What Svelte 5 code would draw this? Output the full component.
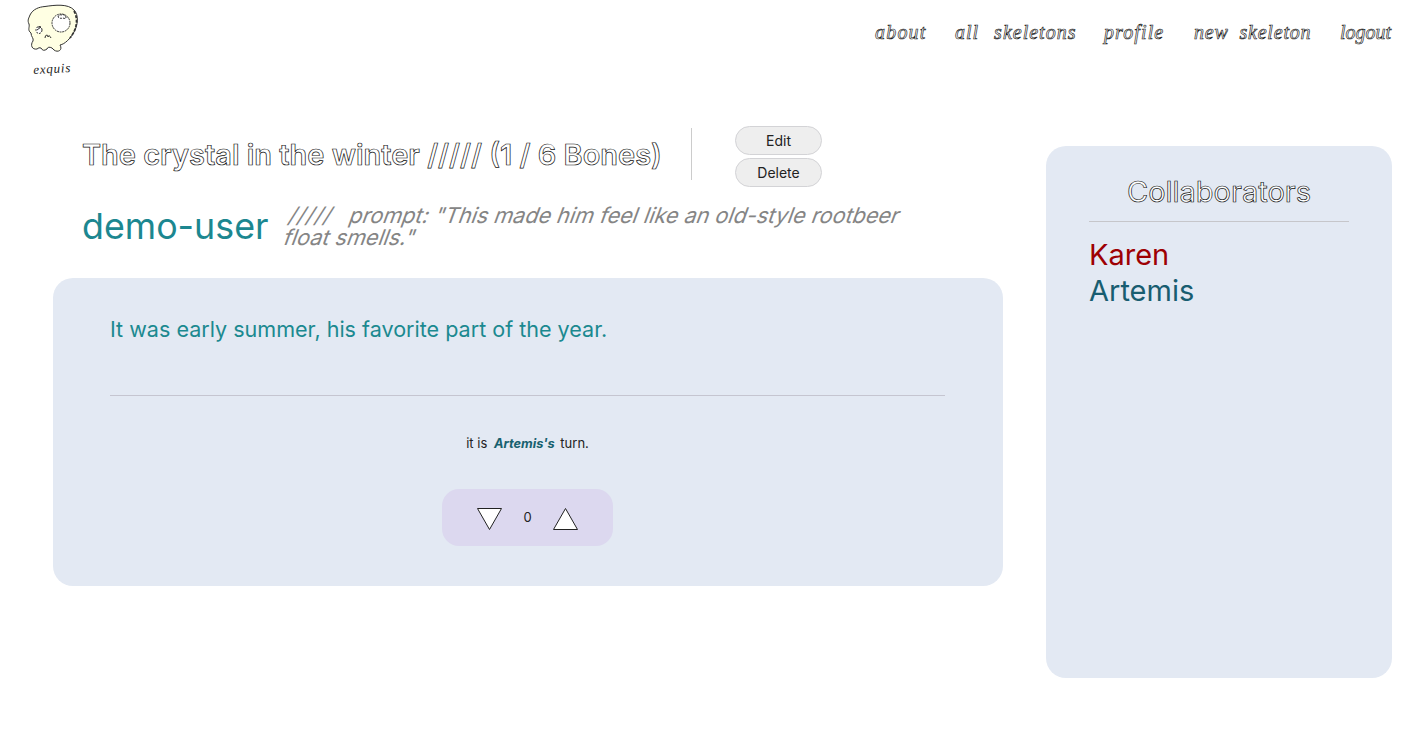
<script>
  const links = [
    { label: 'about', width: 52 },
    { label: 'all skeletons', width: 121 },
    { label: 'profile', width: 62 },
    { label: 'new skeleton', width: 118 },
    { label: 'logout', width: 51 }
  ];
  const people = [
    { name: 'Karen', tone: 'red' },
    { name: 'Artemis', tone: 'teal' }
  ];
</script>

<div class="page">
  <header>
    <div class="brand">
      <svg class="skull" viewBox="0 0 52 50" width="52" height="50" fill="none" stroke="#333" stroke-width="1">
        <path fill="#ffffe3" d="M3 11C6 5 12 3 18 2.500C28 1 41-.5 47 6C52 11 51 21 47 28C43 35 38 40 33 41C36 46 31 49 27 46L25 44Q21 42 20 45Q16 48 14 44Q12 43 10 45C5 46 3 41 6 37C7 34 4 33 4 29C0 26 3 23 2 20C0 16 2 14 3 11Z" />
        <path d="M47 7C52 16 49 27 43 34" stroke-width="1.7" stroke-dasharray="3 1.500" />
        <circle cx="34" cy="19" r="9" fill="#fff" stroke-dasharray="2 .7" />
        <path d="M31 13q1-3 4-2q4-1 4 3q-1 1-3 0q-3 1-5-1" stroke-dasharray="2 1" />
        <ellipse cx="12" cy="26" rx="3" ry="3.500" fill="#fff" stroke-dasharray="2 1" />
        <path d="m10 26 4-3M11 23h3M18 34q0-3 2-3q1 0 1 2q1-3 3 1" />
      </svg>
      <span class="wordmark">exquis</span>
    </div>
    <nav>
      {#each links as link}
        <a href="#top" style="width: {link.width}px">{link.label}</a>
      {/each}
    </nav>
  </header>

  <main>
    <section class="story">
      <div class="title">
        <h1 class="hollow">The crystal in the winter ///// (1 / 6 Bones)</h1>
        <div class="actions">
          <button>Edit</button>
          <button>Delete</button>
        </div>
      </div>
      <div class="meta">
        <a class="author" href="#top">demo-user</a>
        <p class="prompt">
          <span class="line"><span class="slashes">/////</span>prompt: "This made him feel like an old-style rootbeer</span>
          <span class="line">float smells."</span>
        </p>
      </div>
      <article>
        <p class="bone">It was early summer, his favorite part of the year.</p>
        <p class="turn">it is <em>Artemis's</em> turn.</p>
        <div class="votes">
          <svg width="27" height="24" viewBox="0 0 27 24"><path d="M1.500 1.500h24L13.500 22.500z" /></svg>
          <span>0</span>
          <svg width="27" height="24" viewBox="0 0 27 24"><path d="M1.500 22.500h24L13.500 1.500z" /></svg>
        </div>
      </article>
    </section>

    <aside>
      <h2 class="hollow">Collaborators</h2>
      <ul>
        {#each people as person}
          <li class={person.tone}>{person.name}</li>
        {/each}
      </ul>
    </aside>
  </main>
</div>

<style>
  :global(body) { background: #fff; }
  .page { box-sizing: border-box; width: 1426px; height: 738px; overflow: hidden; font-family: Inter, sans-serif; color: #222; }
  header { display: flex; justify-content: space-between; height: 90px; padding: 4px 35px 0 27px; box-sizing: border-box; }
  a { text-decoration: none; }
  .brand { width: 52px; display: flex; flex-direction: column; }
  .skull { display: block; }
  .wordmark { font: italic 13px/18px "Liberation Serif", serif; letter-spacing: .8px; padding: 6px 0 0 6px; transform: rotate(-3deg); }
  nav { display: flex; gap: 28px; padding-top: 16px; }
  nav a { font: italic 20px/24px "Liberation Serif", serif; color: #fff; -webkit-text-stroke: .65px #222; white-space: nowrap; letter-spacing: .8px; }
  nav a:nth-child(2) { word-spacing: 9px; letter-spacing: 1px; }
  nav a:nth-child(4) { word-spacing: 5px; }
  nav a:first-child { letter-spacing: 1.2px; }
  nav a:nth-child(3) { letter-spacing: 1.1px; }
  nav a:last-child { letter-spacing: 0; }
  main { display: flex; align-items: flex-start; gap: 43px; padding-left: 53px; }
  .story { width: 950px; padding-top: 36px; }
  h1, h2, p, ul { margin: 0; padding: 0; }
  .hollow { color: #fff; -webkit-text-stroke: .7px #111; white-space: nowrap; }
  .title { display: flex; align-items: flex-start; height: 61px; padding-left: 29px; }
  h1 { width: 610px; height: 52px; margin-top: 2px; box-sizing: border-box; border-right: 1px solid #ccc; font-size: 28.950px; line-height: 53px; font-weight: 600; }
  .actions { display: flex; flex-direction: column; gap: 3px; padding-left: 43px; }
  button { box-sizing: border-box; width: 87px; height: 29px; border: 1px solid #d3d3d6; border-radius: 15px; background: #eee; padding: 0; font: 14px Inter, sans-serif; color: #222; }
  .meta { display: flex; height: 91px; padding-left: 29px; box-sizing: border-box; }
  .author { width: 203px; font-size: 35.800px; line-height: 45px; padding-top: 17px; color: #1c8790; }
  .prompt { font-size: 21.600px; line-height: 22px; padding-top: 17px; color: #858585; white-space: nowrap; }
  .line { display: block; width: max-content; transform: skewX(-20deg); }
  .slashes { margin: 0 17px 0 5px; letter-spacing: .9px; }
  article { box-sizing: border-box; height: 308px; padding: 36px 58px 40px 57px; border-radius: 20px; background: #e3e9f3; display: flex; flex-direction: column; }
  .bone { height: 81px; border-bottom: 1px solid #c5c5d0; font-size: 21.550px; line-height: 30px; color: #1b8990; padding-bottom: 1px; }
  .turn { padding-top: 38px; font-size: 13px; line-height: 18px; text-align: center; }
  em { margin: 0 2px 0 3px; font-size: 12.800px; font-weight: 700; color: #17616f; }
  .votes { width: 171px; height: 58px; margin: 36px auto 0; border-radius: 17px; background: #dcd8ef; display: flex; align-items: center; justify-content: center; gap: 20px; font-size: 13px; }
  .votes svg { fill: #fff; stroke: #222; stroke-width: 1; position: relative; top: 2px; }
  aside { box-sizing: border-box; width: 346px; height: 532px; margin-top: 56px; padding: 27px 43px; border-radius: 20px; background: #e3e9f3; }
  h2 { height: 48px; border-bottom: 1px solid #c6c6ca; font-size: 29px; line-height: 38px; font-weight: 400; text-align: center; }
  ul { list-style: none; padding-top: 15px; font-size: 29px; line-height: 36px; }
  .red { color: #9e0003; }
  .teal { color: #185d70; }
</style>
